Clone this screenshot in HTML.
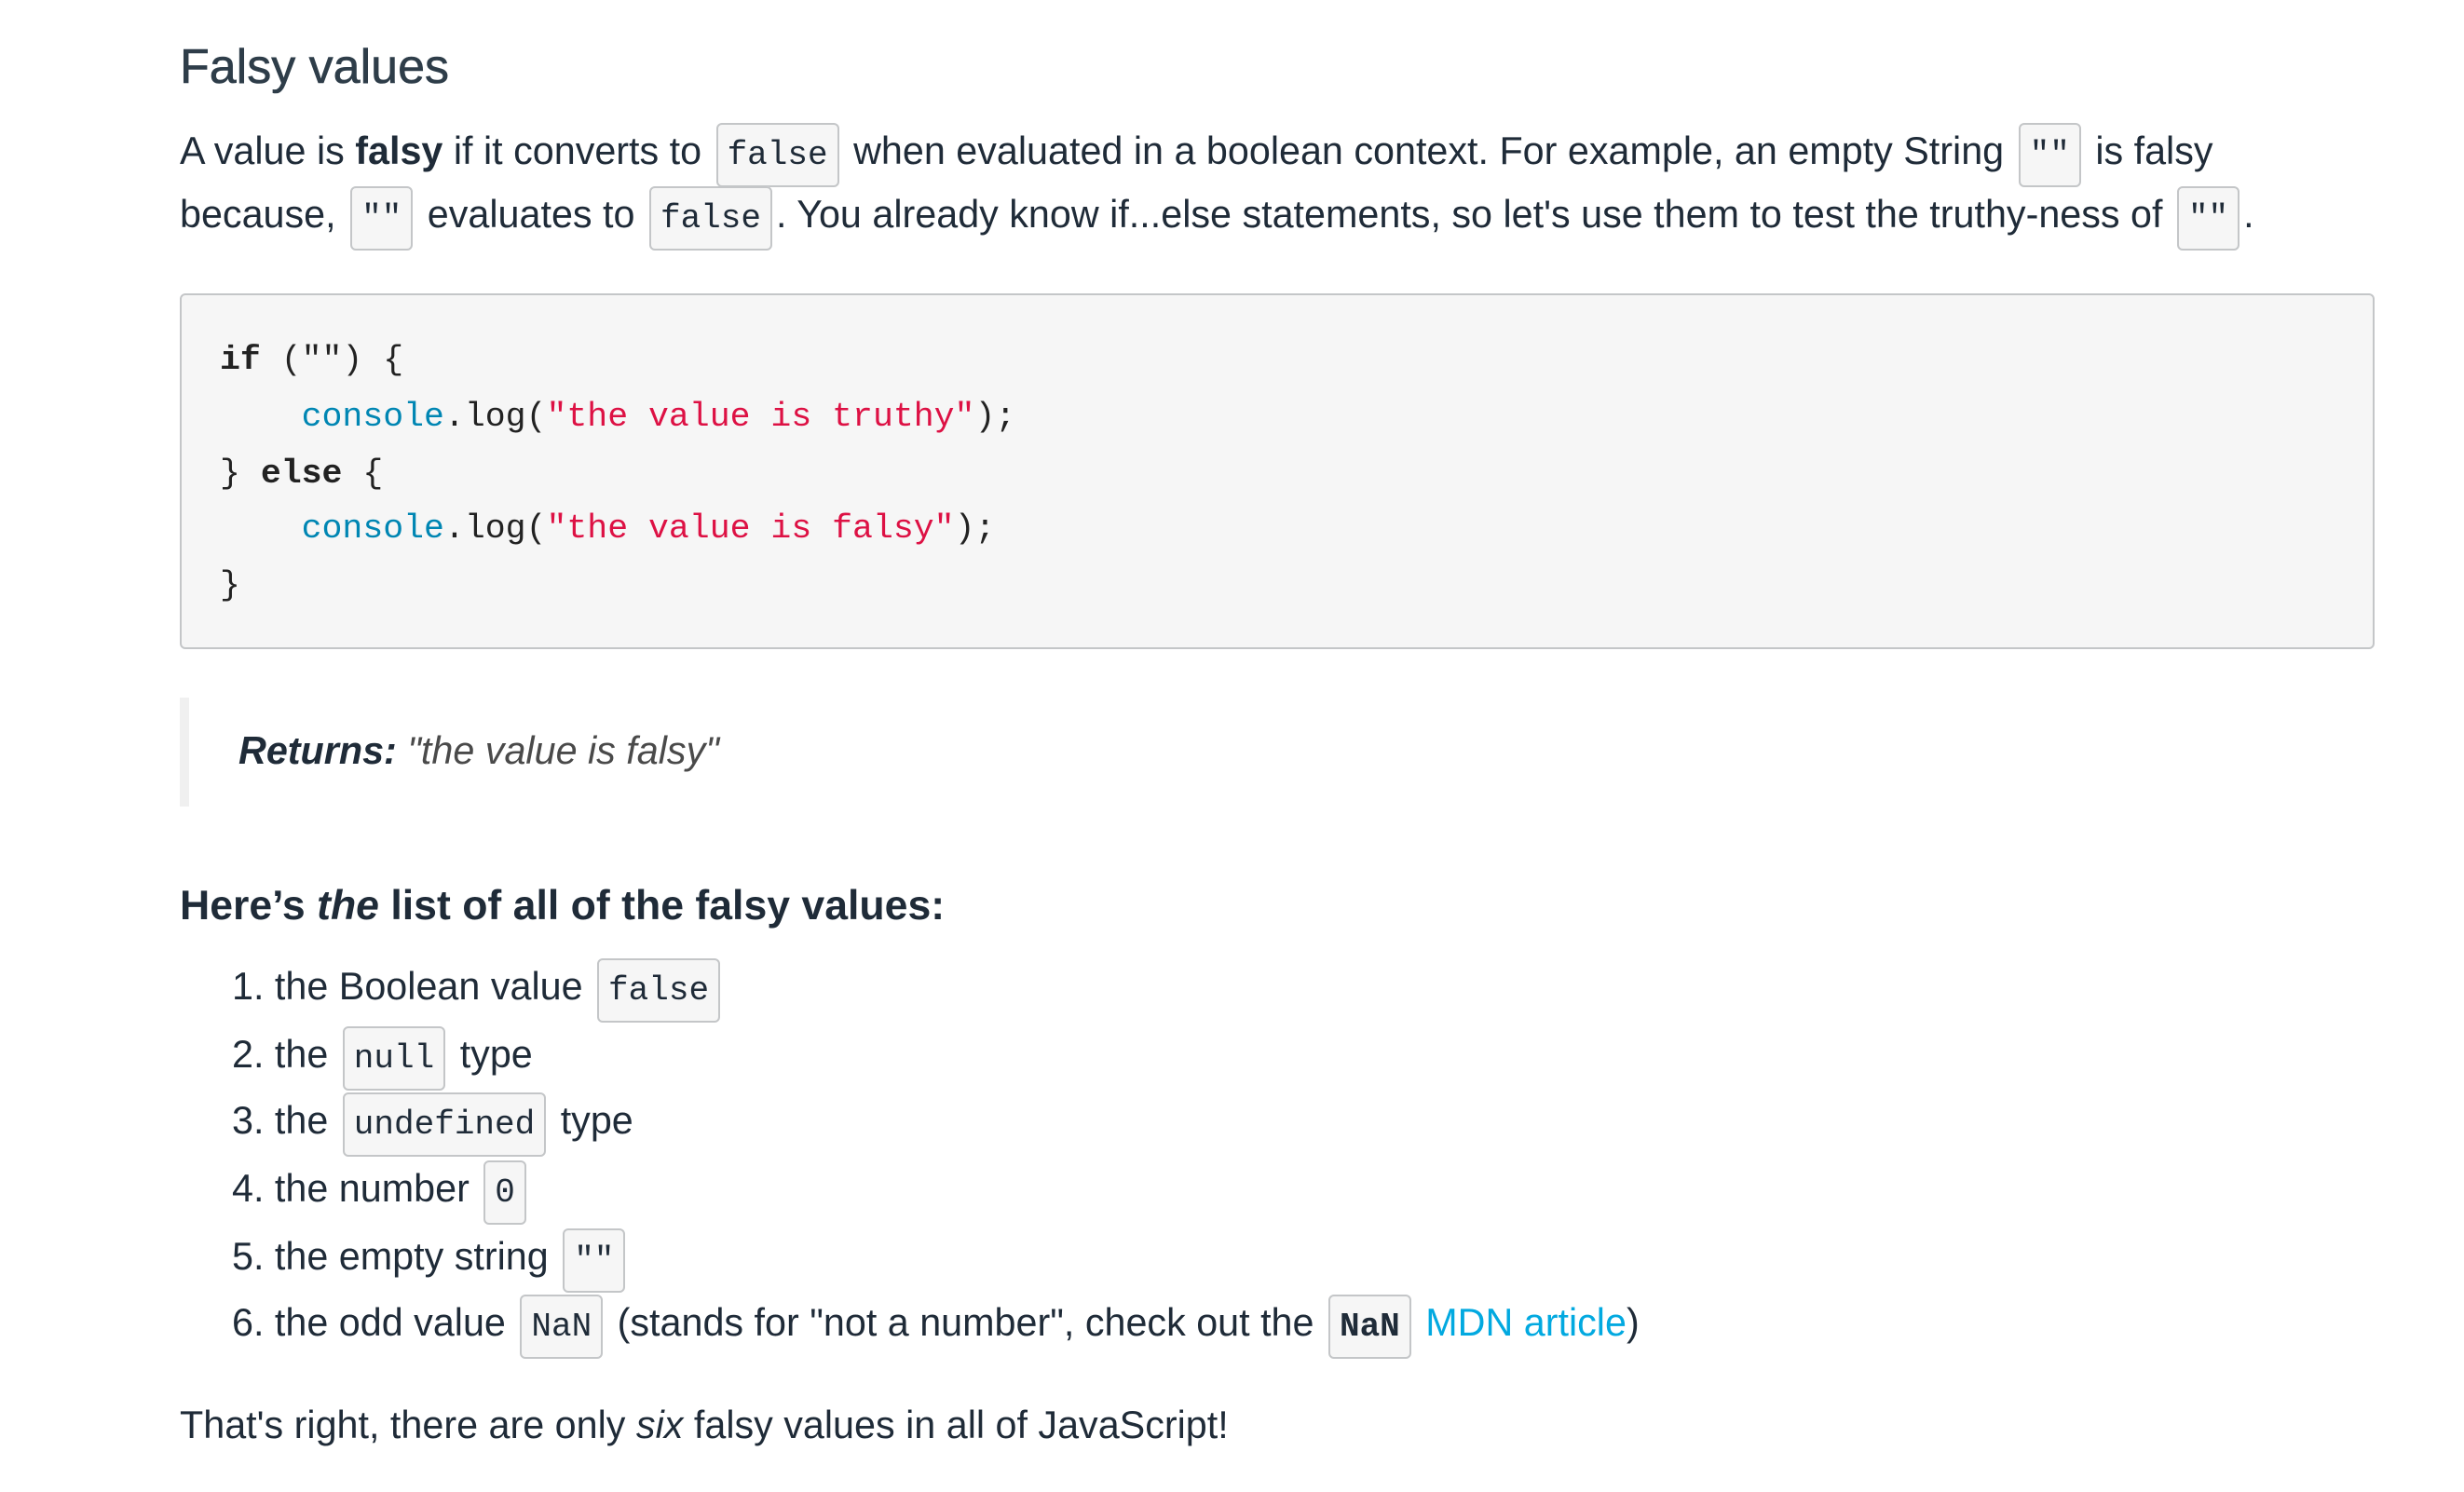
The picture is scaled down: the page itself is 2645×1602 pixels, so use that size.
<!DOCTYPE html>
<html><head><style>
html,body{margin:0;padding:0;background:#fff;}
body{width:2645px;height:1602px;position:relative;overflow:hidden;font-family:"Liberation Sans",sans-serif;color:#1f2b38;}
.l{position:absolute;white-space:nowrap;font-size:41.3px;line-height:68px;}
c{font-family:"Liberation Mono",monospace;font-size:36px;background:#f6f6f6;border:2px solid #c4c6c8;border-radius:6px;padding:12px 10px;margin:0 4px;color:#1f2b38;}
.code{position:absolute;left:193px;top:315px;width:2352px;height:378px;background:#f6f6f6;border:2px solid #c4c6c8;border-radius:6px;}
.cl{position:absolute;left:236px;font-family:"Liberation Mono",monospace;font-size:36.5px;line-height:60px;white-space:pre;color:#222;}
.k{font-weight:bold;}.f{color:#0086b3;}.s{color:#dd1144;}
</style></head><body>
<div class="l" style="left:193px;top:38px;font-size:52px;color:#2e3d49;-webkit-text-stroke:0.6px #2e3d49;">Falsy values</div>
<div class="l" style="left:193px;top:128px;">A value is <b>falsy</b> if it converts to <c>false</c> when evaluated in a boolean context. For example, an empty String <c>""</c> is falsy</div>
<div class="l" style="left:193px;top:196px;">because, <c>""</c> evaluates to <c>false</c>. You already know if...else statements, so let's use them to test the truthy-ness of <c>""</c>.</div>
<div class="code"></div>
<div class="cl" style="top:357px;"><span class="k">if</span> ("") {</div>
<div class="cl" style="top:418px;">    <span class="f">console</span>.log(<span class="s">"the value is truthy"</span>);</div>
<div class="cl" style="top:479px;">} <span class="k">else</span> {</div>
<div class="cl" style="top:538px;">    <span class="f">console</span>.log(<span class="s">"the value is falsy"</span>);</div>
<div class="cl" style="top:599px;">}</div>
<div style="position:absolute;left:193px;top:749px;width:10px;height:117px;background:#f0f0f0;"></div>
<div class="l" style="left:256px;top:772px;font-style:italic;color:#4a4a4a;"><b style="color:#1f2b38">Returns:</b> "the value is falsy"</div>
<div class="l" style="left:193px;top:939px;font-size:44.6px;font-weight:bold;">Here’s <i>the</i> list of all of the falsy values:</div>
<div class="l" style="left:249px;top:1025px;">1. the Boolean value <c>false</c></div>
<div class="l" style="left:249px;top:1098px;">2. the <c>null</c> type</div>
<div class="l" style="left:249px;top:1169px;">3. the <c>undefined</c> type</div>
<div class="l" style="left:249px;top:1242px;">4. the number <c>0</c></div>
<div class="l" style="left:249px;top:1315px;">5. the empty string <c>""</c></div>
<div class="l" style="left:249px;top:1386px;">6. the odd value <c>NaN</c> (stands for "not a number", check out the <c style="font-weight:bold">NaN</c> <span style="color:#02a9e0">MDN article</span>)</div>
<div class="l" style="left:193px;top:1496px;">That's right, there are only <i>six</i> falsy values in all of JavaScript!</div>
</body></html>
